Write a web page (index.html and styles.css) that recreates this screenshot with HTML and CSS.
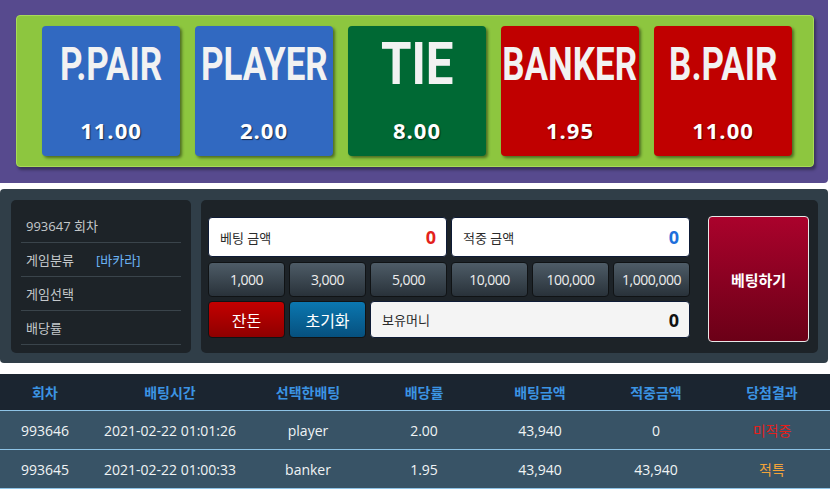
FILE: index.html
```html
<!doctype html>
<html>
<head>
<meta charset="utf-8">
<title>Baccarat</title>
<link rel="stylesheet" href="styles.css">
</head>
<body>

	<div class="board">
		<div class="board-inner">
			<div class="card blue"><span class="card-title">P.PAIR</span><span class="card-rate">11.00</span></div>
			<div class="card blue"><span class="card-title">PLAYER</span><span class="card-rate">2.00</span></div>
			<div class="card green tie"><span class="card-title">TIE</span><span class="card-rate">8.00</span></div>
			<div class="card red"><span class="card-title">BANKER</span><span class="card-rate">1.95</span></div>
			<div class="card red"><span class="card-title">B.PAIR</span><span class="card-rate">11.00</span></div>
		</div>
	</div>

	<div class="control">
		<div class="info">
			<div class="info-row">993647 회차</div>
			<div class="info-row"><span class="info-label">게임분류</span><span class="info-game">[바카라]</span></div>
			<div class="info-row">게임선택</div>
			<div class="info-row">배당률</div>
		</div>
		<div class="betbox">
			<div class="betgrid">
				<div class="field span3"><span>베팅 금액</span><b class="num-red">0</b></div>
				<div class="field span3"><span>적중 금액</span><b class="num-blue">0</b></div>
				<button class="chip">1,000</button>
				<button class="chip">3,000</button>
				<button class="chip">5,000</button>
				<button class="chip">10,000</button>
				<button class="chip">100,000</button>
				<button class="chip">1,000,000</button>
				<button class="act act-red">잔돈</button>
				<button class="act act-blue">초기화</button>
				<div class="field money span4"><span>보유머니</span><b>0</b></div>
			</div>
			<button class="betbtn">베팅하기</button>
		</div>
	</div>

	<table class="history">
		<thead>
			<tr><th class="c1">회차</th><th class="c2">배팅시간</th><th>선택한배팅</th><th>배당률</th><th>배팅금액</th><th>적중금액</th><th>당첨결과</th></tr>
		</thead>
		<tbody>
			<tr><td>993646</td><td>2021-02-22 01:01:26</td><td>player</td><td>2.00</td><td>43,940</td><td>0</td><td class="lose">미적중</td></tr>
			<tr><td>993645</td><td>2021-02-22 01:00:33</td><td>banker</td><td>1.95</td><td>43,940</td><td>43,940</td><td class="push">적특</td></tr>
		</tbody>
	</table>

</body>
</html>
```

FILE: styles.css
```css
body {
	margin: 0;
	background: #FFFFFF;
	font-family: "Open Sans", "Noto Sans CJK KR", sans-serif;
	width: 832px;
}

/* top board */
.board {
	width: 828px;
	height: 183px;
	box-sizing: border-box;
	padding: 15px 14px 16px 16px;
	background: #574A8E;
	border-radius: 0 0 4px 0;
}

.board-inner {
	height: 152px;
	box-sizing: border-box;
	padding: 11px 0 0 25px;
	background: #8DC63F;
	border: 1px solid #A9DA58;
	border-radius: 4px;
	box-shadow: 2px 3px 3px rgba(0,0,0,0.35);
	display: flex;
	gap: 15px;
}

.card {
	width: 138px;
	height: 130px;
	margin-top: -1px;
	border-radius: 4px;
	box-shadow: 2px 2px 3px rgba(0,0,0,0.45);
	display: flex;
	flex-direction: column;
	align-items: center;
	justify-content: space-between;
	box-sizing: border-box;
	padding: 15px 0 14px;
}

.blue { background: #3169C1; }
.green { background: #006934; }
.red { background: #C00000; }

.card-title {
	display: inline-block;
	font-family: Roboto, sans-serif;
	font-weight: 700;
	font-size: 46px;
	line-height: 46px;
	color: #F2F2F2;
	transform: scaleX(0.76);
	white-space: nowrap;
	letter-spacing: 0;
}

.tie .card-title {
	font-size: 60px;
	line-height: 60px;
	margin-top: -7px;
	transform: scaleX(0.82);
}

.card-rate {
	font-weight: 700;
	font-size: 22px;
	line-height: 24px;
	color: #FFFFFF;
	text-shadow: 1px 1px 1px rgba(0,0,0,0.6);
	letter-spacing: 1px;
}

/* control panel */
.control {
	width: 828px;
	height: 174px;
	margin-top: 6px;
	box-sizing: border-box;
	padding: 11px 10px 10px 11px;
	background: #303E48;
	border-radius: 4px;
	display: flex;
	gap: 10px;
}

.info {
	width: 180px;
	background: #1D2328;
	border-radius: 5px;
	box-sizing: border-box;
	padding: 9px 10px 0;
}

.info-row {
	height: 33px;
	line-height: 35px;
	border-bottom: 1px solid #3A444B;
	padding-left: 5px;
	font-size: 13px;
	color: #C4C8CB;
}

.info-label {
	display: inline-block;
	width: 70px;
}

.info-game {
	color: #6CB4F4;
}

.betbox {
	flex: 1;
	background: #1D2328;
	border-radius: 5px;
	box-sizing: border-box;
	padding: 17px 9px 0 7px;
	display: flex;
	gap: 18px;
}

.betgrid {
	width: 482px;
	display: grid;
	grid-template-columns: repeat(6, 77px);
	grid-template-rows: 40px 35px 36px;
	column-gap: 4px;
	row-gap: 5px;
	align-content: start;
}

.span3 { grid-column: span 3; }
.span4 { grid-column: span 4; }

.field {
	background: #FFFFFF;
	border: 1px solid #0E1B36;
	border-radius: 4px;
	display: flex;
	align-items: center;
	justify-content: space-between;
	padding: 0 10px 0 11px;
	font-size: 13px;
	color: #2A2A2A;
}

.field b {
	font-size: 18px;
	font-family: "Open Sans", sans-serif;
}

.num-red { color: #E3221B; }
.num-blue { color: #1D6FDB; }

.money {
	background: #F4F4F4;
	margin-top: -1px;
}

.money b { color: #111111; }

.chip, .act {
	font-family: "Open Sans", "Noto Sans CJK KR", sans-serif;
	border: 1px solid #101315;
	border-radius: 4px;
	padding: 0;
	cursor: pointer;
}

.chip {
	background: linear-gradient(#4E5C67, #29323A);
	color: #EDEDED;
	font-size: 14px;
	letter-spacing: -0.5px;
}

.act {
	color: #FFFFFF;
	font-size: 16px;
	margin-top: -1px;
}

.act-red { background: linear-gradient(#C40000, #8E0000); }
.act-blue { background: linear-gradient(#0B77B0, #06507E); }

.betbtn {
	width: 101px;
	height: 126px;
	margin-top: -1px;
	border: 1px solid #E8E8E8;
	border-radius: 4px;
	background: linear-gradient(#AA022C, #6B0017);
	color: #FFFFFF;
	font-family: "Noto Sans CJK KR", sans-serif;
	font-weight: 700;
	font-size: 15px;
	cursor: pointer;
}

/* history table */
.history {
	width: 830px;
	margin-top: 11px;
	border-collapse: collapse;
	table-layout: fixed;
	font-size: 14px;
	text-align: center;
}

.history th {
	height: 36px;
	background: #1B2530;
	color: #3B94E3;
	font-family: "Noto Sans CJK KR", sans-serif;
	font-weight: 700;
	border-bottom: 1px solid #8EC3E6;
	padding: 0;
}

.history th.c1 { width: 90px; }
.history th.c2 { width: 160px; }

.history td {
	height: 38px;
	background: #385366;
	color: #F0F3F5;
	border-bottom: 1px solid #8EC3E6;
	padding: 0;
}

.history td.lose { color: #E3211C; }
.history td.push { color: #F2A33A; }
```
